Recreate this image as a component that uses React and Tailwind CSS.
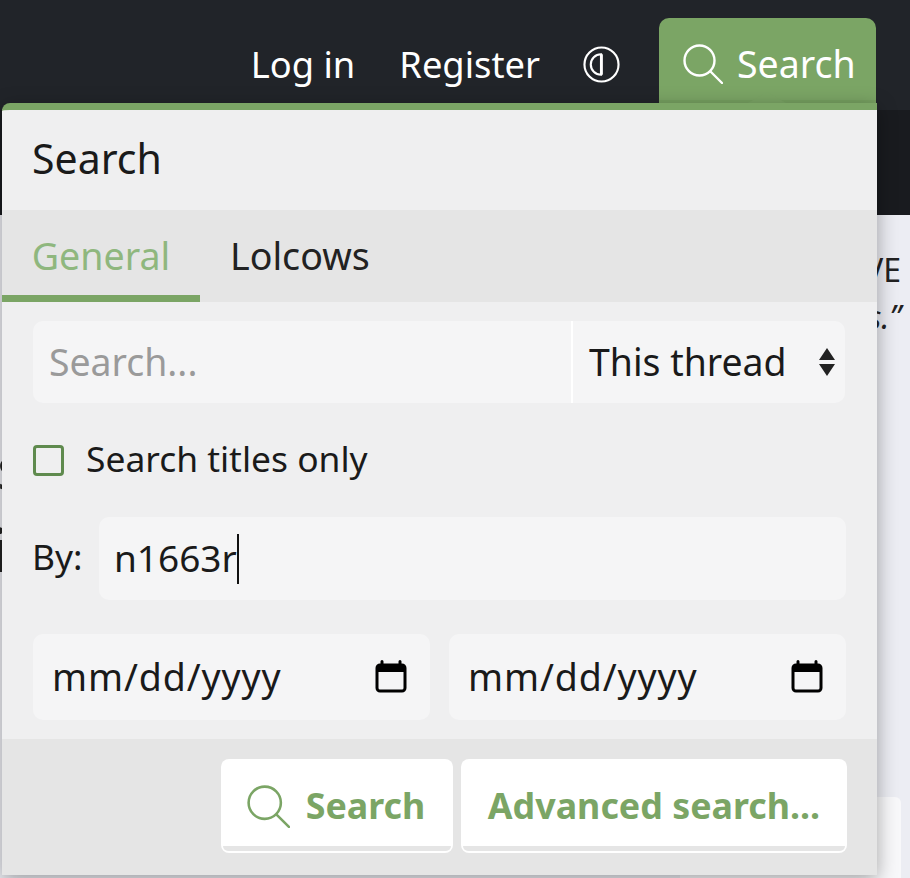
import { useState } from 'react';

const SearchIcon = ({ className }) => (
  <svg viewBox="0 0 40 40" fill="none" stroke="currentColor" strokeWidth="2.4" strokeLinecap="round" className={className}>
    <circle cx="16.5" cy="16.5" r="15" />
    <path d="M27.5 27.5L39 39" />
  </svg>
);

const ContrastIcon = () => (
  <svg viewBox="0 0 38 38" fill="none" stroke="white" strokeWidth="2.2" className="h-[37px] w-[37px]">
    <circle cx="19" cy="19" r="17.5" />
    <path d="M18.5 8.5a10.5 10.5 0 0 0 0 21z" />
    <path d="M19 8.5v21" strokeWidth="2.8" />
  </svg>
);

const CalendarIcon = () => (
  <svg viewBox="0 0 32 34" className="h-[34px] w-[32px]" fill="none">
    <path d="M7 1.5v6M25 1.5v6" stroke="#000" strokeWidth="3" strokeLinecap="round" />
    <rect x="2" y="5" width="28" height="26" rx="3" stroke="#000" strokeWidth="3" />
    <rect x="2" y="5" width="28" height="7" fill="#000" />
  </svg>
);

const DateField = () => (
  <div className="flex h-[86px] flex-1 items-center justify-between rounded-[10px] bg-[#f5f5f6] pl-[19px] pr-[23px] text-[37.5px] tracking-[0.9px] text-[#1a1a1a]">
    <span>mm/dd/yyyy</span>
    <CalendarIcon />
  </div>
);

const FooterButton = ({ children, className }) => (
  <button className={`relative flex h-[94px] items-center justify-center rounded-[8px] bg-white text-[35.8px] font-bold text-[#7ba565] ${className}`}>
    {children}
    <span className="absolute inset-x-[2px] bottom-[2px] h-[5px] rounded-b-[5px] bg-[#e5e5e5]" />
  </button>
);

const SearchMenu = () => {
  const [tab] = useState('General');

  return (
    <div className="absolute left-[2px] top-[103px] w-[875px] overflow-hidden rounded-tl-[8px] border-t-[7px] border-[#7ba565] bg-[#efeff0] shadow-[0_5px_20px_rgba(0,0,0,0.35)]">
      <div className="flex h-[100px] items-center pb-[3px] pl-[30px] text-[41px] leading-none text-[#1a1a1a]">Search</div>

      <div className="flex h-[92px] bg-[#e5e5e5] text-[37.6px] leading-none">
        <div className={`flex w-[198px] items-center justify-center border-b-[7px] border-[#7ba565] pt-[6px] ${tab === 'General' ? 'text-[#8fb77e]' : ''}`}>
          General
        </div>
        <div className="flex items-center pl-[30px] text-[#222]">Lolcows</div>
      </div>

      <div className="flex flex-col px-[31px] pt-[19px]">
        <div className="flex h-[82px] w-[812px] rounded-[10px] bg-[#f5f5f6] text-[37.4px]">
          <div className="flex w-[540px] items-center border-r-2 border-white pl-[16px] text-[#9a9a9a]">Search...</div>
          <div className="flex flex-1 items-center justify-between pl-[16px] pr-[10px] text-[#1a1a1a]">
            <span>This thread</span>
            <svg viewBox="0 0 16 28" className="h-[28px] w-[16px]" fill="#222">
              <path d="M8 0l8 12H0zM8 28L0 16h16z" />
            </svg>
          </div>
        </div>

        <label className="mt-[42px] flex h-[31px] items-center text-[35.4px] text-[#1a1a1a]">
          <span className="h-[31px] w-[31px] rounded-[4px] border-[3px] border-[#5f8a4e]" />
          <span className="ml-[22px] pb-[3px]">Search titles only</span>
        </label>

        <div className="mt-[41px] flex h-[83px] items-center text-[35.4px] text-[#1a1a1a]">
          <span className="-ml-px w-[67px] pb-[3px]">By:</span>
          <div className="flex h-full flex-1 items-center rounded-[10px] bg-[#f5f5f6] pl-[15px] text-[37px]">
            <span className="pb-[1px]">n1663r</span>
            <span className="h-[50px] w-[2px] bg-[#111]" />
          </div>
        </div>

        <div className="mt-[34px] flex gap-[19px]">
          <DateField />
          <DateField />
        </div>
      </div>

      <div className="mt-[19px] flex h-[136px] items-start justify-end gap-[8px] bg-[#e5e5e5] pr-[30px] pt-[20px]">
        <FooterButton className="w-[232px] gap-[16px] pr-[2px]">
          <SearchIcon className="h-[43px] w-[43px]" />
          Search
        </FooterButton>
        <FooterButton className="w-[386px]">Advanced search...</FooterButton>
      </div>
    </div>
  );
};

const App = () => {
  return (
    <div className="relative h-[878px] w-[910px] overflow-hidden bg-[#ecedf3] font-['Noto_Sans',sans-serif]">
      <header className="flex h-[110px] items-start justify-end bg-[#212429] pr-[34px] pt-[18px] text-white">
        <nav className="flex h-[92px] items-center pr-[39px] text-[36.3px]">
          <span>Log in</span>
          <span className="ml-[44px]">Register</span>
          <span className="ml-[43px]"><ContrastIcon /></span>
        </nav>
        <div className="relative flex h-[92px] w-[217px] items-center gap-[14px] rounded-t-[10px] bg-[#7ba565] pl-[24px] text-[37.5px]">
          <SearchIcon className="h-[40px] w-[40px]" />
          <span>Search</span>
          <span className="absolute inset-x-0 bottom-0 h-[10px] bg-[#76a060]" />
          <span className="absolute bottom-[7px] left-[89px] h-0 w-0 border-x-[19px] border-b-[11px] border-x-transparent border-b-[#7ba565]" />
        </div>
      </header>
      <div className="h-[105px] bg-[#191b1f]" />

      <div className="flex justify-between pr-[9px] text-[#222]">
        <div className="pt-[211px] text-[60px] leading-[82px]">
          <p className="-ml-[3px]">s</p>
          <p className="-ml-[8px]">i</p>
        </div>
        <div className="pt-[31px] text-right text-[32px] leading-[47px]">
          <p>VE</p>
          <p className="italic">s.”</p>
        </div>
      </div>

      <div className="absolute left-[680px] top-[797px] h-[100px] w-[221px] rounded-[6px] bg-[#f8f8fa]" />

      <SearchMenu />
    </div>
  );
};

export default App;
